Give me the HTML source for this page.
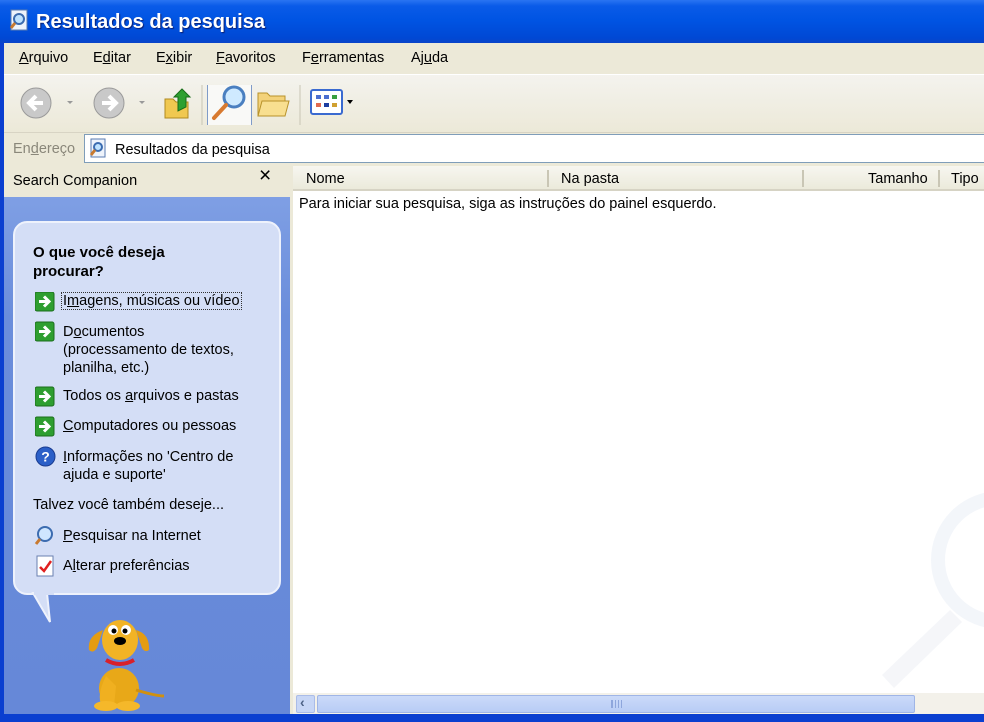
<!DOCTYPE html>
<html><head><meta charset="utf-8"><style>
*{margin:0;padding:0;box-sizing:border-box}
body{width:984px;height:722px;overflow:hidden;position:relative;background:#0a3fd0;font-family:"Liberation Sans",sans-serif;font-size:14px;color:#000}
.a{position:absolute}
.t{white-space:nowrap}
u{text-decoration:underline}
</style></head><body>
<div class="a" style="left:0;top:0;width:984px;height:43px;background:linear-gradient(#2a74f2 0,#0a5be8 6px,#0054e3 20px,#0048d4 38px,#0a44c8 43px)"></div>
<svg class="a" style="left:9px;top:9px" width="22" height="24"><rect x="2" y="1" width="16" height="20" fill="#eef3fb" stroke="#5a7bb0"/><circle cx="10" cy="10" r="5" fill="#bfe3ff" stroke="#3c6cb0" stroke-width="2"/><line x1="6" y1="14" x2="2" y2="19" stroke="#c87a30" stroke-width="3"/></svg>
<div class="a t" style="left:36px;top:11px;color:#fff;font-weight:bold;font-size:20px;text-shadow:1px 1px 1px #0a1e70">Resultados da pesquisa</div>
<div class="a" style="left:0;top:43px;width:4px;height:679px;background:#0a3fd0"></div>
<div class="a" style="left:4px;top:43px;width:980px;height:32px;background:#ece9d8"></div>
<div class="a t" style="left:19px;top:50px;font-size:14.5px"><u>A</u>rquivo</div>
<div class="a t" style="left:93px;top:50px;font-size:14.5px">E<u>d</u>itar</div>
<div class="a t" style="left:156px;top:50px;font-size:14.5px">E<u>x</u>ibir</div>
<div class="a t" style="left:216px;top:50px;font-size:14.5px"><u>F</u>avoritos</div>
<div class="a t" style="left:302px;top:50px;font-size:14.5px">F<u>e</u>rramentas</div>
<div class="a t" style="left:411px;top:50px;font-size:14.5px">Aj<u>u</u>da</div>
<div class="a" style="left:4px;top:74px;width:980px;height:58px;background:linear-gradient(#f4f3ee,#ece9d8);border-top:1px solid #fff"></div>
<svg class="a" style="left:18px;top:85px" width="340" height="40">
<circle cx="18" cy="18" r="15" fill="#c9c9c9" stroke="#9a9a9a"/><path d="M25 18H12M18 11l-7 7 7 7" stroke="#fff" stroke-width="4" fill="none"/>
<path d="M49 16l3 3 3-3z" fill="#999"/>
<circle cx="91" cy="18" r="15" fill="#c9c9c9" stroke="#9a9a9a"/><path d="M84 18h13M91 11l7 7-7 7" stroke="#fff" stroke-width="4" fill="none"/>
<path d="M121 16l3 3 3-3z" fill="#999"/>
<path d="M147 14h8l3 3h12v16h-23z" fill="#f0c850" stroke="#b08a20"/><path d="M160 26v-14h-4l8-8 8 8h-4v10z" fill="#2ea030" stroke="#176d18"/>
<line x1="184" y1="0" x2="184" y2="40" stroke="#c8c5b4"/>
<rect x="189.5" y="-8.5" width="44" height="52" rx="3" fill="#f9f9f7" stroke="#7f9bc8"/>
<circle cx="216" cy="12" r="10" fill="#cfeaff" stroke="#4a7fc0" stroke-width="3"/><line x1="208" y1="20" x2="196" y2="33" stroke="#d87a30" stroke-width="4" stroke-linecap="round"/>
<path d="M240 8h9l3 3h15v20h-27z" fill="#f3d27a" stroke="#b8922a"/><path d="M244 16h27l-4 15h-27z" fill="#f8df90" stroke="#b8922a"/>
<line x1="282" y1="0" x2="282" y2="40" stroke="#c8c5b4"/>
<rect x="293" y="5" width="31" height="24" rx="2" fill="#fff" stroke="#3a6ad0" stroke-width="2"/>
<g fill="#4a6ed0"><rect x="298" y="10" width="5" height="4"/><rect x="306" y="10" width="5" height="4"/><rect x="314" y="10" width="5" height="4" fill="#3aa040"/><rect x="298" y="18" width="5" height="4" fill="#e06a50"/><rect x="306" y="18" width="5" height="4" fill="#1e3ea0"/><rect x="314" y="18" width="5" height="4" fill="#d0a030"/></g>
<path d="M329 15l3 4 3-4z" fill="#000"/>
</svg>
<div class="a" style="left:4px;top:132px;width:980px;height:34px;background:#ece9d8;border-top:1px solid #d8d4c4"></div>
<div class="a t" style="left:13px;top:141px;color:#8a877a;font-size:14.5px">En<u>d</u>ereço</div>
<div class="a" style="left:84px;top:134px;width:910px;height:29px;background:#fff;border:1px solid #7f9db9"></div>
<svg class="a" style="left:89px;top:138px" width="20" height="22"><rect x="2" y="1" width="14" height="18" fill="#eef3fb" stroke="#5a7bb0"/><circle cx="9" cy="9" r="4" fill="#bfe3ff" stroke="#3c6cb0" stroke-width="2"/><line x1="6" y1="12" x2="2" y2="17" stroke="#c87a30" stroke-width="3"/></svg>
<div class="a t" style="left:115px;top:142px;font-size:14.5px">Resultados da pesquisa</div>
<div class="a" style="left:4px;top:166px;width:288px;height:31px;background:#ece9d8"></div>
<div class="a t" style="left:13px;top:173px;font-size:14.5px">Search Companion</div>
<div class="a t" style="left:259px;top:164px;font-size:21px">×</div>
<div class="a" style="left:4px;top:197px;width:286px;height:517px;background:linear-gradient(#7f9fe4,#6a8ddb 120px,#6688d8)"></div>
<div class="a" style="left:290px;top:166px;width:3px;height:548px;background:#ece9d8"></div>
<div class="a" style="left:13px;top:221px;width:268px;height:374px;background:#d4def6;border:2px solid #eef2fc;border-radius:14px"></div>
<svg class="a" style="left:30px;top:590px" width="30" height="36"><path d="M3 3L20 32 17 3z" fill="#d4def6" stroke="#eef2fc" stroke-width="2"/><rect x="4" y="0" width="20" height="5" fill="#d4def6"/></svg>
<div class="a" style="left:33px;top:243px;font-weight:bold;font-size:15px;line-height:19px">O que você deseja<br>procurar?</div>
<svg class="a" style="left:35px;top:292px" width="20" height="150"><defs><g id="ar"><rect x="0" y="0" width="19" height="19" rx="2" fill="#2e9e30" stroke="#1b6e1c"/><path d="M4 9.5h9M9 4.5l5 5-5 5" stroke="#fff" stroke-width="3" fill="none"/></g></defs><use href="#ar"/><use href="#ar" y="30"/><use href="#ar" y="95"/><use href="#ar" y="125"/></svg>
<div class="a t" style="left:61px;top:292px;border:1px dotted #333;padding:0 1px;font-size:14.5px">I<u>m</u>agens, músicas ou vídeo</div>
<div class="a" style="left:63px;top:323px;line-height:18px;font-size:14.5px">D<u>o</u>cumentos<br>(processamento de textos,<br>planilha, etc.)</div>
<div class="a t" style="left:63px;top:388px;font-size:14.5px">Todos os <u>a</u>rquivos e pastas</div>
<div class="a t" style="left:63px;top:418px;font-size:14.5px"><u>C</u>omputadores ou pessoas</div>
<svg class="a" style="left:35px;top:446px" width="21" height="21"><circle cx="10.5" cy="10.5" r="9.5" fill="#2b5fc8" stroke="#1a3c90"/><text x="10.5" y="15.5" font-size="14" font-weight="bold" fill="#fff" text-anchor="middle" font-family="Liberation Sans">?</text></svg>
<div class="a" style="left:63px;top:448px;line-height:18px;font-size:14.5px"><u>I</u>nformações no 'Centro de<br>ajuda e suporte'</div>
<div class="a t" style="left:33px;top:497px;font-size:14.5px">Talvez você também deseje...</div>
<svg class="a" style="left:34px;top:525px" width="22" height="22"><circle cx="11" cy="9" r="7" fill="#cfe6ff" stroke="#3c6cb0" stroke-width="2"/><line x1="6" y1="14" x2="2" y2="19" stroke="#c87a30" stroke-width="3"/></svg>
<div class="a t" style="left:63px;top:528px;font-size:14.5px"><u>P</u>esquisar na Internet</div>
<svg class="a" style="left:36px;top:555px" width="20" height="23"><rect x="1" y="1" width="16" height="20" fill="#fff" stroke="#6a80b0"/><path d="M4 12l4 4 7-10" stroke="#e02020" stroke-width="2.5" fill="none"/></svg>
<div class="a t" style="left:63px;top:558px;font-size:14.5px">A<u>l</u>terar preferências</div>
<svg class="a" style="left:76px;top:608px" width="90" height="104">
<ellipse cx="43" cy="80" rx="20" ry="20" fill="#e8a818"/>
<path d="M30 68q-10 20 -4 30h12l2-20z" fill="#f0b020"/>
<path d="M60 82q20 6 28 6" stroke="#d09010" stroke-width="3" fill="none"/>
<ellipse cx="30" cy="98" rx="12" ry="5" fill="#f5b82a"/><ellipse cx="52" cy="98" rx="12" ry="5" fill="#f5b82a"/>
<ellipse cx="44" cy="32" rx="18" ry="20" fill="#f2b325"/>
<path d="M27 22q-16 6-14 20 4 4 8-2z" fill="#e49c12"/><path d="M60 22q14 4 13 20-4 3-7-2z" fill="#e49c12"/>
<path d="M30 52q14 8 28 0" stroke="#d8202a" stroke-width="4" fill="none"/>
<circle cx="37" cy="22" r="5" fill="#fff"/><circle cx="50" cy="22" r="5" fill="#fff"/><circle cx="38" cy="23" r="2.5"/><circle cx="49" cy="23" r="2.5"/>
<ellipse cx="44" cy="33" rx="6" ry="4"/>
</svg>
<div class="a" style="left:293px;top:166px;width:691px;height:548px;background:#fff"></div>
<div class="a" style="left:293px;top:166px;width:691px;height:25px;background:linear-gradient(#f7f6f0,#ebeadb);border-bottom:2px solid #d6d3c4"></div>
<div class="a" style="left:547px;top:170px;width:2px;height:17px;background:#c9c6b5"></div>
<div class="a" style="left:802px;top:170px;width:2px;height:17px;background:#c9c6b5"></div>
<div class="a" style="left:938px;top:170px;width:2px;height:17px;background:#c9c6b5"></div>
<div class="a t" style="left:306px;top:171px;font-size:14.5px">Nome</div>
<div class="a t" style="left:561px;top:171px;font-size:14.5px">Na pasta</div>
<div class="a t" style="left:868px;top:171px;font-size:14.5px">Tamanho</div>
<div class="a t" style="left:951px;top:171px;font-size:14.5px">Tipo</div>
<div class="a t" style="left:299px;top:196px;font-size:14.5px">Para iniciar sua pesquisa, siga as instruções do painel esquerdo.</div>
<svg class="a" style="left:870px;top:490px" width="114" height="200" opacity="0.35"><circle cx="130" cy="70" r="62" fill="none" stroke="#dfe6f2" stroke-width="14"/><path d="M80 120L12 185 24 198 92 132z" fill="#e3e8f0"/></svg>
<div class="a" style="left:293px;top:693px;width:691px;height:21px;background:#f3f1ea"></div>
<div class="a" style="left:296px;top:695px;width:19px;height:18px;background:#c7d6f6;border:1px solid #aabce8;border-radius:2px"></div>
<div class="a t" style="left:300px;top:694px;font-size:14px;color:#4d6185;font-weight:bold">‹</div>
<div class="a" style="left:317px;top:695px;width:598px;height:18px;background:linear-gradient(#cbdaf9,#b8ccf5);border:1px solid #9fb5e6;border-radius:2px"></div>
<div class="a" style="left:611px;top:700px;width:12px;height:8px;border-left:1px solid #8ea6dc;background:repeating-linear-gradient(90deg,#8ea6dc 0 1px,transparent 1px 3px)"></div>
<div class="a" style="left:0;top:714px;width:984px;height:8px;background:#0a3fd0"></div>
</body></html>
